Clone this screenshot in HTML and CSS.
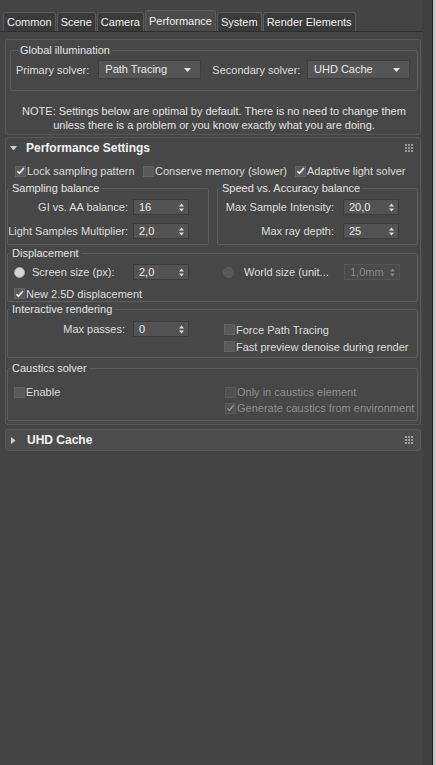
FILE: index.html
```html
<!DOCTYPE html>
<html lang="en">
<head>
  <meta charset="UTF-8">
  <title>Render Setup - Performance</title>
  <link rel="stylesheet" href="styles.css">
</head>
<body>
  <div class="window">
    <div class="main">
      <div class="tabs">
        <div class="tab">Common</div>
        <div class="tab">Scene</div>
        <div class="tab">Camera</div>
        <div class="tab active">Performance</div>
        <div class="tab">System</div>
        <div class="tab">Render Elements</div>
      </div>

      <!-- global illumination, no header -->
      <div class="rollout first">
        <fieldset class="group gi">
          <legend>Global illumination</legend>
          <div class="solvers">
            <span>Primary solver:</span>
            <div class="combo primary">Path Tracing
              <svg class="drop" width="7" height="4" viewBox="0 0 7 4"><path d="M0 0H7L3.5 4Z" fill="#e6e6e6"/></svg>
            </div>
            <span class="second-label">Secondary solver:</span>
            <div class="combo secondary">UHD Cache
              <svg class="drop" width="7" height="4" viewBox="0 0 7 4"><path d="M0 0H7L3.5 4Z" fill="#e6e6e6"/></svg>
            </div>
          </div>
        </fieldset>
        <p class="note">NOTE: Settings below are optimal by default. There is no need to change them<br>unless there is a problem or you know exactly what you are doing.</p>
      </div>

      <div class="rollout">
        <div class="roll-head">
          <svg class="tri" width="7" height="5" viewBox="0 0 7 5"><path d="M0 0H7L3.5 4.5Z" fill="#cfcfcf"/></svg>
          <span class="title">Performance Settings</span>
          <svg class="grip" width="8" height="8" viewBox="0 0 8 8" fill="#9a9a9a">
            <rect x="0" y="0" width="2" height="2"/><rect x="3" y="0" width="2" height="2"/><rect x="6" y="0" width="2" height="2"/>
            <rect x="0" y="3" width="2" height="2"/><rect x="3" y="3" width="2" height="2"/><rect x="6" y="3" width="2" height="2"/>
            <rect x="0" y="6" width="2" height="2"/><rect x="3" y="6" width="2" height="2"/><rect x="6" y="6" width="2" height="2"/>
          </svg>
        </div>
        <div class="roll-body">
          <div class="check-row">
            <label class="check"><span class="box on"><svg width="10" height="10" viewBox="0 0 10 10"><path d="M1.5 5.2L3.8 7.6L8.8 1.6" fill="none" stroke="#f2f2f2" stroke-width="1.7"/></svg></span>Lock sampling pattern</label>
            <label class="check"><span class="box"></span>Conserve memory (slower)</label>
            <label class="check"><span class="box on"><svg width="10" height="10" viewBox="0 0 10 10"><path d="M1.5 5.2L3.8 7.6L8.8 1.6" fill="none" stroke="#f2f2f2" stroke-width="1.7"/></svg></span>Adaptive light solver</label>
          </div>

          <div class="pair">
            <fieldset class="group balance left">
              <legend>Sampling balance</legend>
              <span class="lbl">GI vs. AA balance:</span>
              <div class="spin"><span>16</span><svg width="5" height="9" viewBox="0 0 5 9"><path d="M0 3.5L2.5 0.5L5 3.5ZM0 5.5H5L2.5 8.5Z" fill="#dcdcdc"/></svg></div>
              <span class="lbl">Light Samples Multiplier:</span>
              <div class="spin"><span>2,0</span><svg width="5" height="9" viewBox="0 0 5 9"><path d="M0 3.5L2.5 0.5L5 3.5ZM0 5.5H5L2.5 8.5Z" fill="#dcdcdc"/></svg></div>
            </fieldset>
            <fieldset class="group balance right">
              <legend>Speed vs. Accuracy balance</legend>
              <span class="lbl">Max Sample Intensity:</span>
              <div class="spin"><span>20,0</span><svg width="5" height="9" viewBox="0 0 5 9"><path d="M0 3.5L2.5 0.5L5 3.5ZM0 5.5H5L2.5 8.5Z" fill="#dcdcdc"/></svg></div>
              <span class="lbl">Max ray depth:</span>
              <div class="spin"><span>25</span><svg width="5" height="9" viewBox="0 0 5 9"><path d="M0 3.5L2.5 0.5L5 3.5ZM0 5.5H5L2.5 8.5Z" fill="#dcdcdc"/></svg></div>
            </fieldset>
          </div>

          <fieldset class="group displacement">
            <legend>Displacement</legend>
            <div class="halves">
              <div class="cell">
                <span class="radio on"></span>
                <span class="grow">Screen size (px):</span>
                <div class="spin"><span>2,0</span><svg width="5" height="9" viewBox="0 0 5 9"><path d="M0 3.5L2.5 0.5L5 3.5ZM0 5.5H5L2.5 8.5Z" fill="#dcdcdc"/></svg></div>
              </div>
              <div class="cell right">
                <span class="radio"></span>
                <span class="grow">World size (unit...</span>
                <div class="spin off"><span>1,0mm</span><svg width="5" height="9" viewBox="0 0 5 9"><path d="M0 3.5L2.5 0.5L5 3.5ZM0 5.5H5L2.5 8.5Z" fill="#8a8a8a"/></svg></div>
              </div>
            </div>
            <label class="check single"><span class="box on"><svg width="10" height="10" viewBox="0 0 10 10"><path d="M1.5 5.2L3.8 7.6L8.8 1.6" fill="none" stroke="#f2f2f2" stroke-width="1.7"/></svg></span>New 2.5D displacement</label>
          </fieldset>

          <fieldset class="group interactive">
            <legend>Interactive rendering</legend>
            <div class="halves">
              <div class="cell">
                <span class="grow lbl">Max passes:</span>
                <div class="spin"><span>0</span><svg width="5" height="9" viewBox="0 0 5 9"><path d="M0 3.5L2.5 0.5L5 3.5ZM0 5.5H5L2.5 8.5Z" fill="#dcdcdc"/></svg></div>
              </div>
              <div class="stack">
                <label class="check"><span class="box"></span>Force Path Tracing</label>
                <label class="check"><span class="box"></span>Fast preview denoise during render</label>
              </div>
            </div>
          </fieldset>

          <fieldset class="group caustics">
            <legend>Caustics solver</legend>
            <div class="halves">
              <div class="stack">
                <label class="check"><span class="box"></span>Enable</label>
              </div>
              <div class="stack">
                <label class="check off"><span class="box"></span>Only in caustics element</label>
                <label class="check off"><span class="box on"><svg width="10" height="10" viewBox="0 0 10 10"><path d="M1.5 5.2L3.8 7.6L8.8 1.6" fill="none" stroke="#8e8e8e" stroke-width="1.7"/></svg></span>Generate caustics from environment</label>
              </div>
            </div>
          </fieldset>
        </div>
      </div>

      <div class="rollout closed">
        <div class="roll-head">
          <svg class="tri" width="5" height="7" viewBox="0 0 5 7"><path d="M0 0V7L4.5 3.5Z" fill="#cfcfcf"/></svg>
          <span class="title">UHD Cache</span>
          <svg class="grip" width="8" height="8" viewBox="0 0 8 8" fill="#9a9a9a">
            <rect x="0" y="0" width="2" height="2"/><rect x="3" y="0" width="2" height="2"/><rect x="6" y="0" width="2" height="2"/>
            <rect x="0" y="3" width="2" height="2"/><rect x="3" y="3" width="2" height="2"/><rect x="6" y="3" width="2" height="2"/>
            <rect x="0" y="6" width="2" height="2"/><rect x="3" y="6" width="2" height="2"/><rect x="6" y="6" width="2" height="2"/>
          </svg>
        </div>
      </div>
    </div>
    <div class="scroll"></div>
    <div class="edge"></div>
  </div>
</body>
</html>
```

FILE: styles.css
```css
* {
  box-sizing: border-box;
}

body {
  margin: 0;
  background-color: #444444;
  color: #dedede;
  font-family: "Liberation Sans", Arial, sans-serif;
  font-size: 11px;
}

.window {
  display: flex;
  height: 765px;
}

.main {
  width: 423px;
}

.scroll {
  width: 9px;
  background-color: #3f3f3f;
}

.edge {
  width: 4px;
  border-left: 1px solid #1b1b1b;
  background-color: #c4c4c4;
}

/* tab strip */
.tabs {
  display: flex;
  align-items: flex-end;
  gap: 1px;
  height: 32px;
  padding-left: 3px;
  border-bottom: 1px solid #2d2d2d;
}

.tab {
  height: 19px;
  padding: 0 3px;
  line-height: 18px;
  color: #f0f0f0;
  background-color: #3a3a3a;
  border: 1px solid #5c5c5c;
  border-bottom: none;
  border-radius: 3px 3px 0 0;
}

.tab.active {
  height: 21px;
  line-height: 21px;
  background-color: #4b4b4b;
}

/* rollouts */
.rollout {
  margin: 2px 2px 0 5px;
  background-color: #474747;
  border: 1px solid #595959;
  border-radius: 3px;
}

.rollout.first {
  margin-top: 7px;
  padding: 4px 2px 2px 4px;
}

.rollout.closed {
  margin-top: 4px;
  background-color: #4d4d4d;
}

.roll-head {
  display: flex;
  align-items: center;
  height: 20px;
  padding: 0 7px 0 4px;
}

.roll-head .tri {
  margin: 0 9px 0 0;
}

.rollout.closed .tri {
  margin: 0 11px 0 1px;
}

.roll-head .title {
  flex: 1;
  font-size: 12px;
  font-weight: bold;
  color: #f4f4f4;
}

.roll-body {
  padding: 0 2px 3px 1px;
}

/* group boxes */
.group {
  margin: 0;
  padding: 3px 6px 10px;
  border: 1px solid #5d5d5d;
  border-radius: 2px;
  min-width: 0;
}

.group legend {
  margin-left: 2px;
  padding: 0 2px;
  line-height: 13px;
  color: #e4e4e4;
}

.gi {
  padding: 3px 7px 11px 5px;
}

.solvers {
  display: flex;
  align-items: center;
  height: 19px;
}

.combo {
  position: relative;
  width: 103px;
  height: 19px;
  margin-left: 9px;
  padding-left: 6px;
  line-height: 17px;
  color: #e8e8e8;
  background-color: #555555;
  border: 1px solid #3d3d3d;
}

.combo .drop {
  position: absolute;
  right: 9px;
  top: 7px;
}

.second-label {
  margin-left: 11px;
}

.combo.secondary {
  margin-left: auto;
}

.note {
  margin: 13px 0 0;
  text-align: center;
  line-height: 14px;
  color: #e2e2e2;
}

/* checkboxes and radios */
.check {
  display: flex;
  align-items: center;
  white-space: nowrap;
}

.check.off {
  color: #8e8e8e;
}

.box {
  display: flex;
  align-items: center;
  justify-content: center;
  flex: none;
  width: 11px;
  height: 11px;
  margin-right: 1px;
  background-color: #595959;
  border: 1px solid #646464;
}

.check.off .box {
  background-color: #505050;
  border-color: #5a5a5a;
}

.radio {
  flex: none;
  width: 11px;
  height: 11px;
  border-radius: 50%;
  background-color: #575757;
  border: 1px solid #5f5f5f;
}

.radio.on {
  background-color: #d6d6d6;
  border-color: #a8a8a8;
}

.check-row {
  display: grid;
  grid-template-columns: 128px 152px 1fr;
  align-items: center;
  height: 14px;
  margin: 6px 0 4px;
  padding-left: 8px;
}

/* spinners */
.spin {
  display: flex;
  align-items: center;
  justify-content: space-between;
  flex: none;
  width: 56px;
  height: 16px;
  padding: 0 4px 0 5px;
  color: #ececec;
  background-color: #535353;
  border: 1px solid #3b3b3b;
}

.spin.off {
  color: #8a8a8a;
  background-color: #4a4a4a;
  border-color: #555555;
}

.lbl {
  text-align: right;
  white-space: nowrap;
}

.pair {
  display: grid;
  grid-template-columns: 202px 1fr;
  gap: 8px;
}

.balance {
  display: grid;
  grid-template-columns: minmax(0, 1fr) 56px;
  align-items: center;
  column-gap: 5px;
  row-gap: 8px;
  padding: 4px 19px 5px 0;
}

.balance.right {
  column-gap: 9px;
  padding-right: 18px;
}

.displacement {
  margin-top: 2px;
  padding: 4px 0 1px 0;
}

.halves {
  display: grid;
  grid-template-columns: 201px 1fr;
}

.cell {
  display: flex;
  align-items: center;
  height: 16px;
  padding: 0 20px 0 6px;
}

.cell.right {
  padding: 0 17px 0 14px;
}

.cell .radio {
  margin-right: 7px;
}

.cell.right .radio {
  margin-right: 10px;
}

.grow {
  flex: 1;
}

.interactive .cell .grow {
  margin-right: 8px;
}

.check.single {
  height: 13px;
  margin: 7px 0 0 6px;
}

.interactive {
  margin-top: 1px;
  padding: 5px 0 2px 0;
}

.stack {
  display: flex;
  flex-direction: column;
}

.stack .check {
  height: 17px;
}

.interactive .stack {
  padding-left: 15px;
}

.caustics {
  margin-top: 4px;
  padding: 9px 0 4px 0;
}

.caustics .stack .check {
  height: 16px;
}

.caustics .stack:first-child {
  padding-left: 6px;
}

.caustics .stack + .stack {
  padding-left: 16px;
}
```
